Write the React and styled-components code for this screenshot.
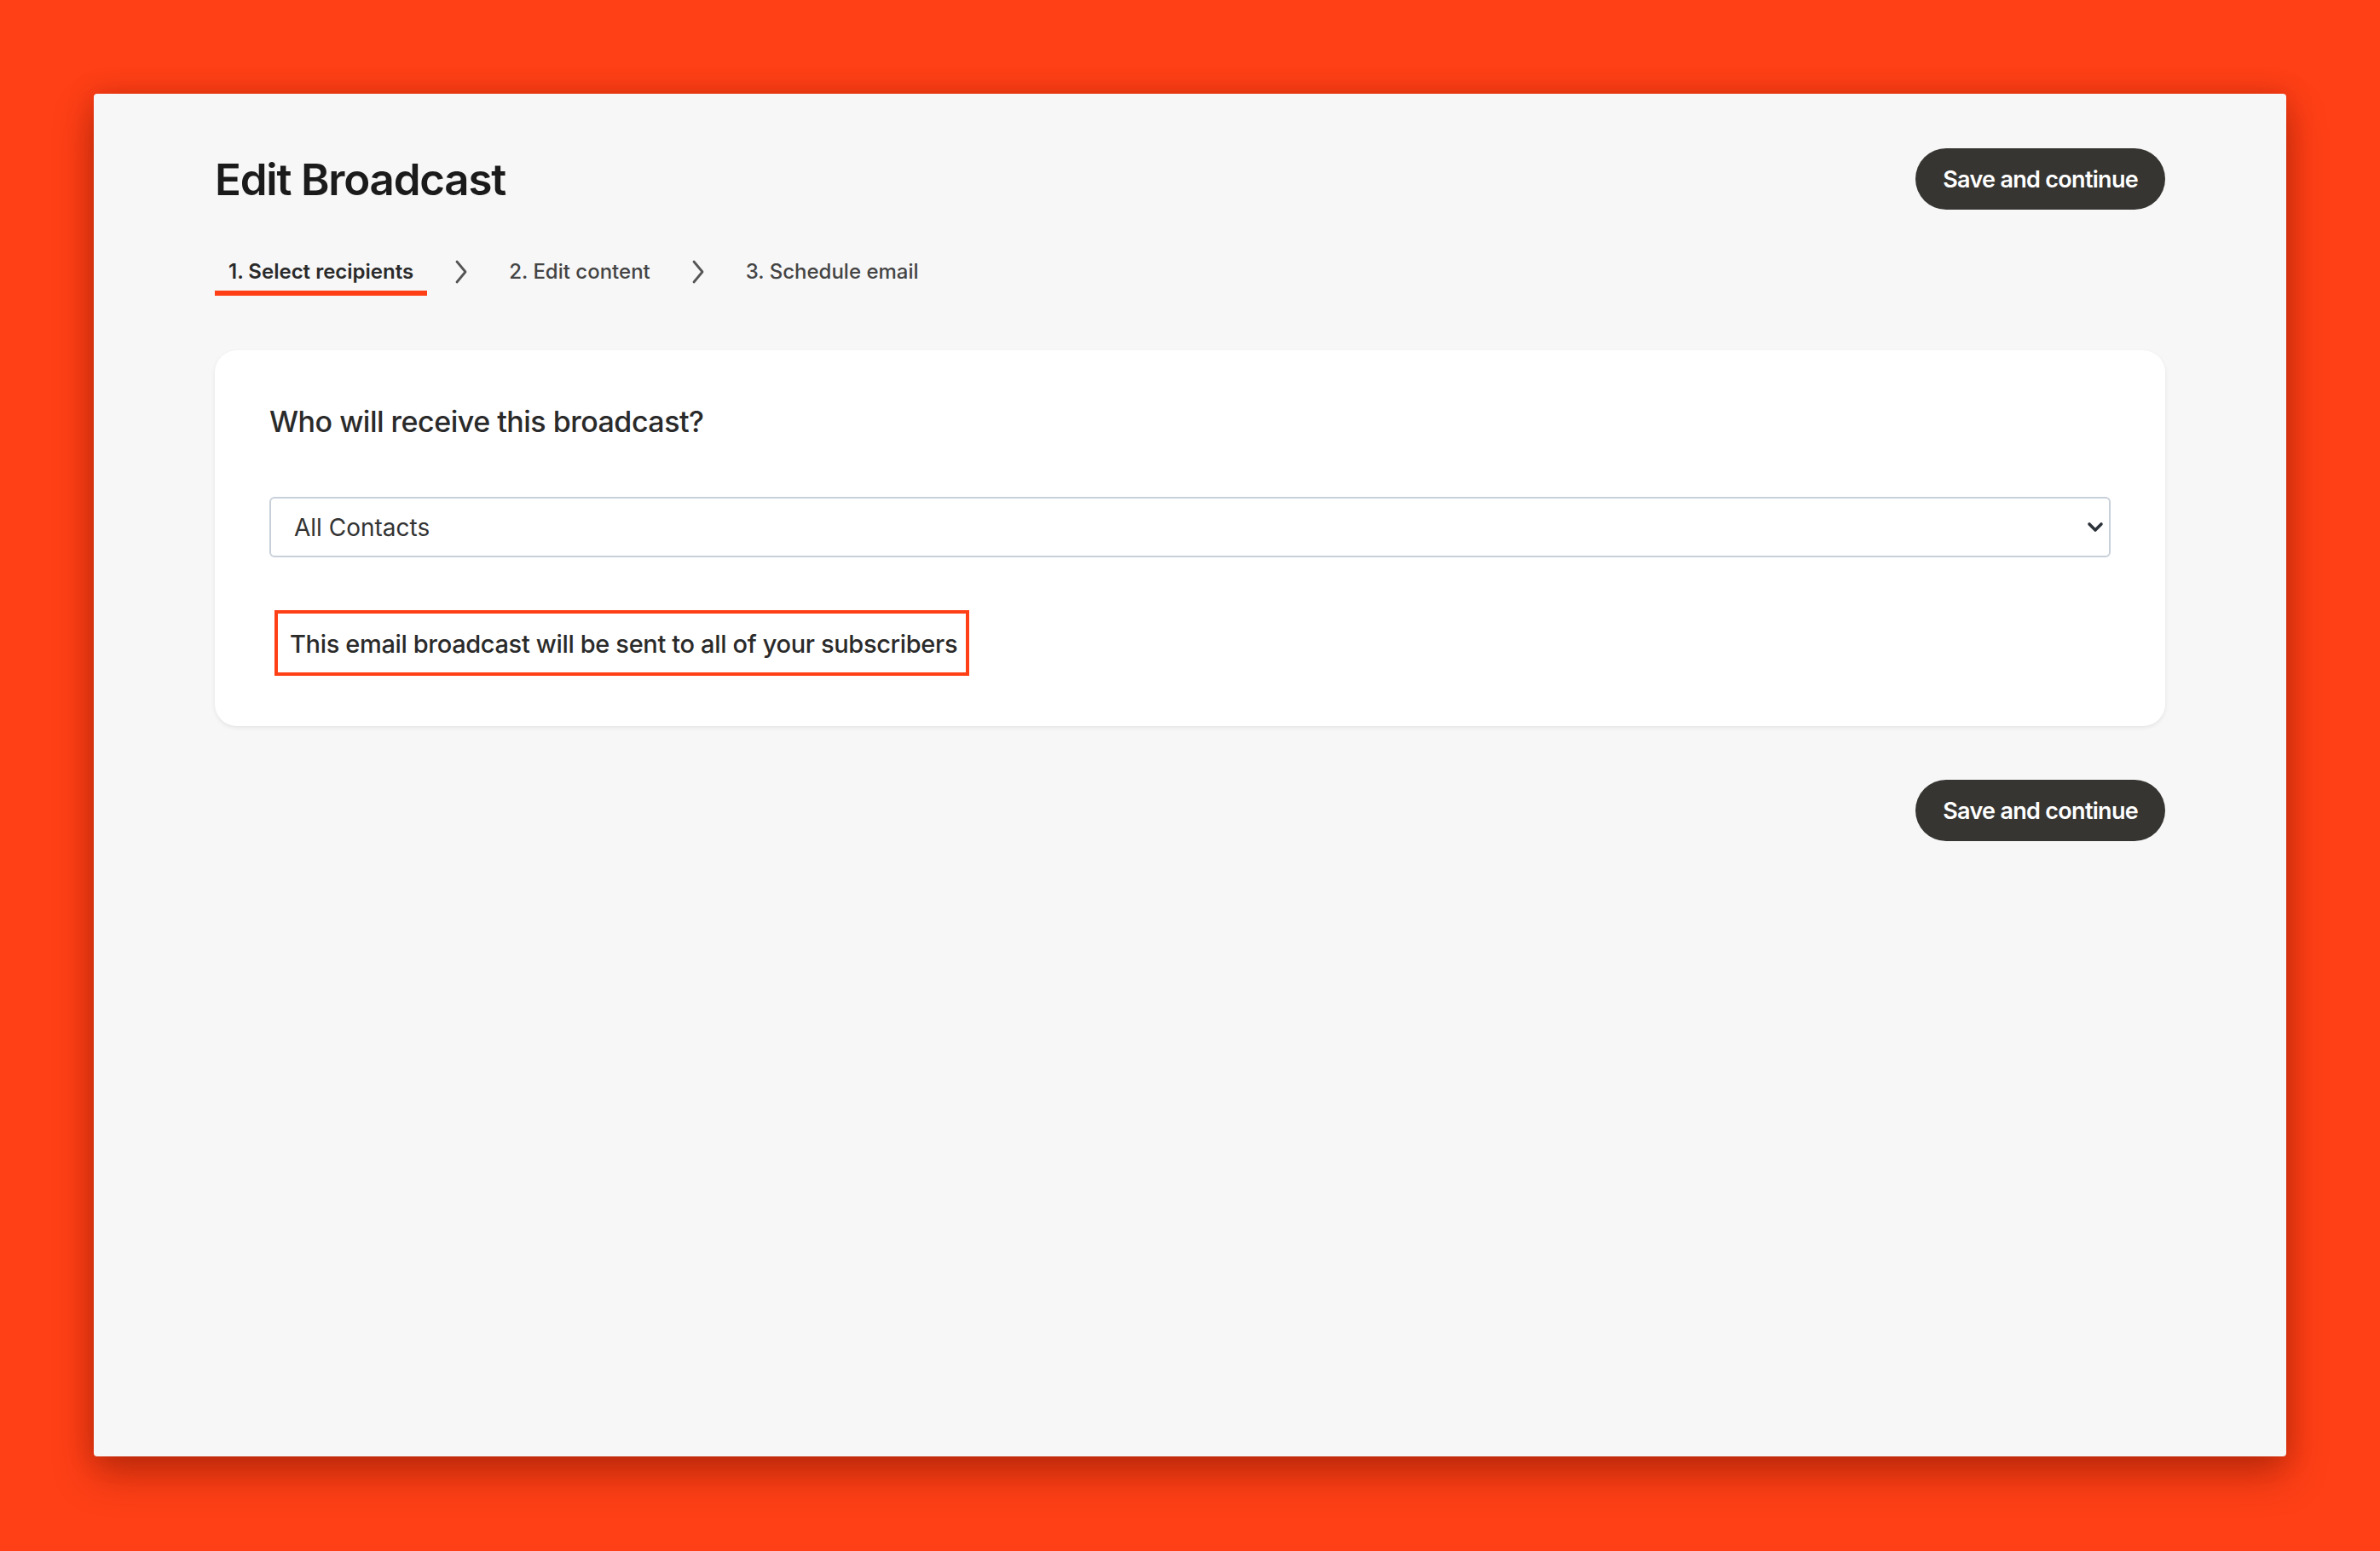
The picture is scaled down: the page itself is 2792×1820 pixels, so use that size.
import styled, { createGlobalStyle } from 'styled-components';

const GlobalStyle = createGlobalStyle`
  html, body {
    margin: 0;
    padding: 0;
    background: #ff4016;
  }
  body {
    font-family: Inter, "Noto Sans", "Liberation Sans", sans-serif;
    color: #222;
  }
`;

const Stage = styled.div`
  width: 2792px;
  height: 1820px;
  padding: 110px;
  box-sizing: border-box;
  background: #ff4016;
`;

const Window = styled.div`
  height: 1599px;
  background: #f7f7f7;
  border-radius: 4px;
  box-shadow: 0 22px 46px rgba(120, 20, 0, 0.45), 0 0 30px rgba(120, 20, 0, 0.25);
  padding: 64px 142px 0 142px;
  box-sizing: border-box;
`;

const Header = styled.div`
  display: flex;
  align-items: center;
  justify-content: space-between;
  height: 72px;
`;

const Title = styled.h1`
  margin: 0;
  font-size: 51px;
  font-weight: 600;
  letter-spacing: -1.2px;
  color: #1b1b1b;
`;

const Button = styled.button`
  height: 72px;
  padding: 0 32px;
  border: none;
  border-radius: 36px;
  background: #363532;
  color: #fff;
  font-family: Inter, "Noto Sans", sans-serif;
  font-size: 27px;
  font-weight: 600;
  letter-spacing: -0.7px;
  cursor: pointer;
`;

const Steps = styled.div`
  display: flex;
  align-items: center;
  gap: 32px;
  margin-top: 44px;
`;

const Step = styled.div`
  padding: 0 16px 8px;
  font-size: 24px;
  font-weight: ${p => (p.active ? 600 : 500)};
  color: ${p => (p.active ? '#2a2a2a' : '#444')};
  border-bottom: 6px solid ${p => (p.active ? '#ff4016' : 'transparent')};
  margin-top: 14px;
`;

const Chevron = styled.svg`
  width: 16px;
  height: 28px;
  flex: none;
`;

const Card = styled.div`
  margin-top: 64px;
  background: #fff;
  border-radius: 26px;
  box-shadow: 0 2px 5px rgba(0, 0, 0, 0.08);
  padding: 63px 64px 59px 64px;
`;

const Question = styled.h2`
  margin: 0;
  font-size: 34px;
  font-weight: 500;
  letter-spacing: -0.5px;
  color: #2a2a2a;
`;

const SelectWrap = styled.div`
  position: relative;
  margin-top: 68px;
`;

const Select = styled.select`
  display: block;
  width: 100%;
  height: 71px;
  padding: 0 50px 0 27px;
  border: 2px solid #c8d0da;
  border-radius: 6px;
  background: #fff;
  appearance: none;
  font-family: Inter, "Noto Sans", sans-serif;
  font-size: 28px;
  color: #333;
`;

const SelectArrow = styled.svg`
  position: absolute;
  right: 8px;
  top: 29px;
  width: 20px;
  height: 14px;
  pointer-events: none;
`;

const Notice = styled.div`
  display: inline-block;
  margin: 62px 0 0 6px;
  padding: 18px 10px 16px 14px;
  border: 4px solid #ff4016;
  font-size: 29px;
  font-weight: 500;
  letter-spacing: -0.35px;
  color: #2a2a2a;
`;

const Footer = styled.div`
  display: flex;
  justify-content: flex-end;
  margin-top: 63px;
`;

const Arrow = () => (
  <Chevron viewBox="0 0 16 28">
    <path d="M3 2 L13 14 L3 26" fill="none" stroke="#555" strokeWidth="2.8" strokeLinecap="round" strokeLinejoin="round" />
  </Chevron>
);

const App = () => {
  return (
    <Stage>
      <GlobalStyle />
      <Window>
        <Header>
          <Title>Edit Broadcast</Title>
          <Button>Save and continue</Button>
        </Header>

        <Steps>
          <Step active>1. Select recipients</Step>
          <Arrow />
          <Step>2. Edit content</Step>
          <Arrow />
          <Step>3. Schedule email</Step>
        </Steps>

        <Card>
          <Question>Who will receive this broadcast?</Question>
          <SelectWrap>
            <Select defaultValue="all">
              <option value="all">All Contacts</option>
            </Select>
            <SelectArrow viewBox="0 0 20 14">
              <path d="M3 3 L10 10 L17 3" fill="none" stroke="#2d333a" strokeWidth="3.6" strokeLinecap="round" strokeLinejoin="round" />
            </SelectArrow>
          </SelectWrap>
          <Notice>This email broadcast will be sent to all of your subscribers</Notice>
        </Card>

        <Footer>
          <Button>Save and continue</Button>
        </Footer>
      </Window>
    </Stage>
  );
};

export default App;
